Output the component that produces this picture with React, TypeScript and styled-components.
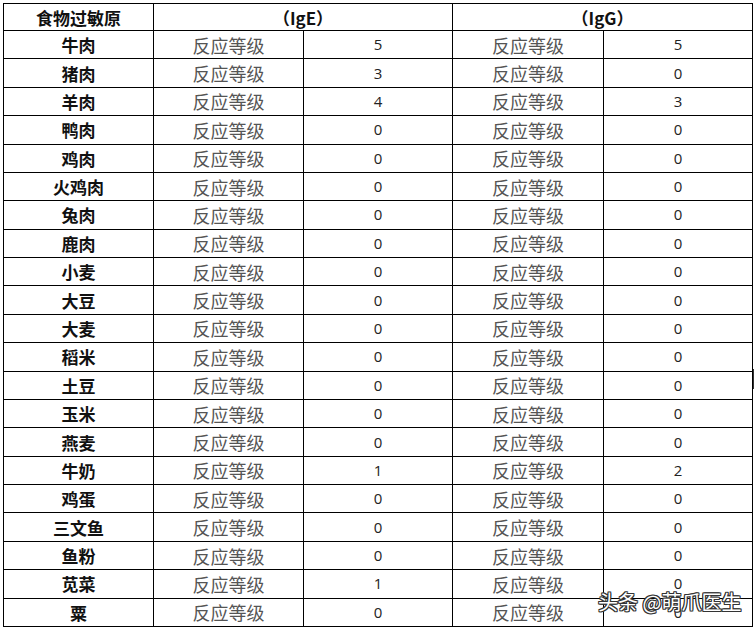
import React from "react";
import styled, { createGlobalStyle } from "styled-components";

const Global = createGlobalStyle`
  html, body { margin: 0; padding: 0; background: #fff; }
  body { font-family: "Noto Sans CJK SC", "Liberation Sans", sans-serif; }
`;

const Page = styled.div`
  position: relative;
  width: 755px;
  height: 629px;
  padding: 3px 0 0 3px;
  box-sizing: border-box;
  background: #fff;
`;

const Grid = styled.div`
  display: grid;
  width: 750px;
  height: 624px;
  box-sizing: border-box;
  background: #000;
  padding: 1px;
  gap: 1px;
  grid-template-columns: 149px 149px 148px 150px 148px;
  grid-template-rows: 26px repeat(21, 1fr);
`;

const Cell = styled.div<{ $span?: number; $kind: "head" | "food" | "label" | "num" }>`
  background: #fff;
  display: flex;
  align-items: center;
  justify-content: center;
  grid-column: ${(p) => (p.$span ? `span ${p.$span}` : "auto")};
  white-space: nowrap;
  font-family: ${(p) =>
    p.$kind === "num"
      ? `"Open Sans", "Liberation Sans", sans-serif`
      : `"Noto Sans CJK SC", sans-serif`};
  font-size: ${(p) =>
    p.$kind === "num" ? "15px" : p.$kind === "label" ? "18px" : "17px"};
  font-weight: ${(p) => (p.$kind === "head" || p.$kind === "food" ? 700 : 400)};
  color: ${(p) => (p.$kind === "label" ? "#555" : p.$kind === "num" ? "#222" : "#111")};
  line-height: 1;
`;

const Watermark = styled.div`
  position: absolute;
  left: 598px;
  top: 590px;
  font-family: "Noto Sans CJK SC", sans-serif;
  font-size: 20px;
  line-height: 1.2;
  color: #fff;
  white-space: nowrap;
  text-shadow: 1px 0 0 #333, -1px 0 0 #333, 0 1px 0 #333, 0 -1px 0 #333,
    1px 1px 0 #333, -1px -1px 0 #333, 1px -1px 0 #333, -1px 1px 0 #333;
`;

const EdgeMark = styled.div`
  position: absolute;
  left: 753px;
  top: 369px;
  width: 1px;
  height: 20px;
  background: #333;
`;

const rows: [string, number, number][] = [
  ["牛肉", 5, 5],
  ["猪肉", 3, 0],
  ["羊肉", 4, 3],
  ["鸭肉", 0, 0],
  ["鸡肉", 0, 0],
  ["火鸡肉", 0, 0],
  ["兔肉", 0, 0],
  ["鹿肉", 0, 0],
  ["小麦", 0, 0],
  ["大豆", 0, 0],
  ["大麦", 0, 0],
  ["稻米", 0, 0],
  ["土豆", 0, 0],
  ["玉米", 0, 0],
  ["燕麦", 0, 0],
  ["牛奶", 1, 2],
  ["鸡蛋", 0, 0],
  ["三文鱼", 0, 0],
  ["鱼粉", 0, 0],
  ["苋菜", 1, 0],
  ["粟", 0, 0],
];

export default function App() {
  return (
    <>
      <Global />
      <Page>
        <Grid>
          <Cell $kind="head">食物过敏原</Cell>
          <Cell $kind="head" $span={2}>（IgE）</Cell>
          <Cell $kind="head" $span={2}>（IgG）</Cell>
          {rows.map(([name, e, g]) => (
            <React.Fragment key={name}>
              <Cell $kind="food">{name}</Cell>
              <Cell $kind="label">反应等级</Cell>
              <Cell $kind="num">{e}</Cell>
              <Cell $kind="label">反应等级</Cell>
              <Cell $kind="num">{g}</Cell>
            </React.Fragment>
          ))}
        </Grid>
        <EdgeMark />
        <Watermark>头条 @萌爪医生</Watermark>
      </Page>
    </>
  );
}
